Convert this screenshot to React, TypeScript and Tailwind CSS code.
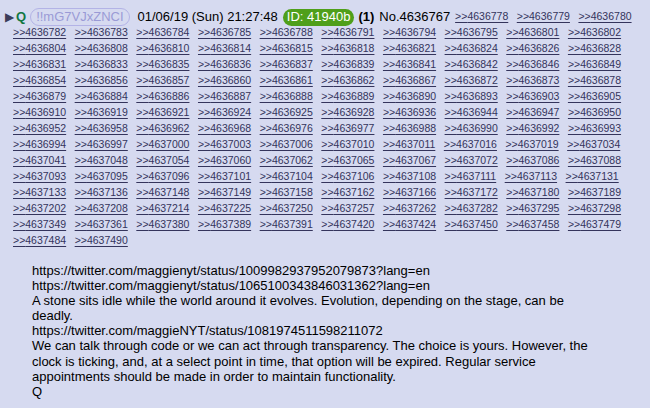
const replies = [
  4636778, 4636779, 4636780, 4636782, 4636783, 4636784, 4636785, 4636788, 4636791, 4636794, 4636795, 4636801,
  4636802, 4636804, 4636808, 4636810, 4636814, 4636815, 4636818, 4636821, 4636824, 4636826, 4636828, 4636831,
  4636833, 4636835, 4636836, 4636837, 4636839, 4636841, 4636842, 4636846, 4636849, 4636854, 4636856, 4636857,
  4636860, 4636861, 4636862, 4636867, 4636872, 4636873, 4636878, 4636879, 4636884, 4636886, 4636887, 4636888,
  4636889, 4636890, 4636893, 4636903, 4636905, 4636910, 4636919, 4636921, 4636924, 4636925, 4636928, 4636936,
  4636944, 4636947, 4636950, 4636952, 4636958, 4636962, 4636968, 4636976, 4636977, 4636988, 4636990, 4636992,
  4636993, 4636994, 4636997, 4637000, 4637003, 4637006, 4637010, 4637011, 4637016, 4637019, 4637034, 4637041,
  4637048, 4637054, 4637060, 4637062, 4637065, 4637067, 4637072, 4637086, 4637088, 4637093, 4637095, 4637096,
  4637101, 4637104, 4637106, 4637108, 4637111, 4637113, 4637131, 4637133, 4637136, 4637148, 4637149, 4637158,
  4637162, 4637166, 4637172, 4637180, 4637189, 4637202, 4637208, 4637214, 4637225, 4637250, 4637257, 4637262,
  4637282, 4637295, 4637298, 4637349, 4637361, 4637380, 4637389, 4637391, 4637420, 4637424, 4637450, 4637458,
  4637479, 4637484, 4637490,
];

function Backlink({ id }: { id: number }) {
  return (
    <a href="#" className="text-[10.5px] text-[#34345c] underline underline-offset-2 whitespace-nowrap">
      &gt;&gt;{id}
    </a>
  );
}

export default function App() {
  // first three sit on the header line, the rest wrap ten to a row
  const first = replies.slice(0, 3);
  const rows: number[][] = [];
  for (let i = 3; i < replies.length; i += 10) rows.push(replies.slice(i, i + 10));

  return (
    <div className="w-[650px] h-[408px] overflow-hidden bg-[#d6daf0] text-black font-['Liberation_Sans',Arial,sans-serif]">
      <div className="pl-[13px] pt-[9px]">
        <div className="flex items-center h-[16px] text-[13px] whitespace-nowrap">
          <span className="ml-[-8px] text-[12px] text-[#3c3c5a]">▶</span>
          <span className="ml-[2px] font-bold text-[#117743]">Q</span>
          <span className="ml-[4px] px-[5px] h-[18px] flex items-center rounded-full border border-[#b3b3e6] text-[#9a9ad6]">
            !!mG7VJxZNCI
          </span>
          <span className="ml-[8px]">01/06/19 (Sun) 21:27:48</span>
          <span className="ml-[5px] px-[4px] h-[17px] flex items-center rounded-full bg-[#4f9f1a] text-white">
            ID: 41940b
          </span>
          <span className="ml-[4px] font-bold">(1)</span>
          <span className="ml-[5px]">No.4636767</span>
          <div className="ml-[5px] flex gap-x-[8.5px]">
            {first.map((id) => (
              <Backlink key={id} id={id} />
            ))}
          </div>
        </div>
        {rows.map((row, i) => (
          <div key={i} className="flex items-center h-[16px] gap-x-[8.5px]">
            {row.map((id) => (
              <Backlink key={id} id={id} />
            ))}
          </div>
        ))}
      </div>

      <div className="mt-[14px] ml-[32px] w-[570px] text-[13px] leading-[15.1px]">
        <p>https://twitter.com/maggienyt/status/1009982937952079873?lang=en</p>
        <p>https://twitter.com/maggienyt/status/1065100343846031362?lang=en</p>
        <p>A stone sits idle while the world around it evolves. Evolution, depending on the stage, can be deadly.</p>
        <p>https://twitter.com/maggieNYT/status/1081974511598211072</p>
        <p>
          We can talk through code or we can act through transparency. The choice is yours. However, the clock is
          ticking, and, at a select point in time, that option will be expired. Regular service appointments should be
          made in order to maintain functionality.
        </p>
        <p>Q</p>
      </div>
    </div>
  );
}
